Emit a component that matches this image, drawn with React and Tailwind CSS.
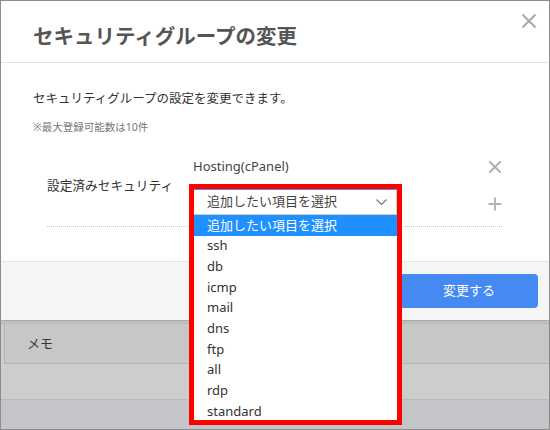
import { useState } from "react";

const options = ["追加したい項目を選択", "ssh", "db", "icmp", "mail", "dns", "ftp", "all", "rdp", "standard"];

function CrossIcon({ size = 14 }) {
  return (
    <svg width={size} height={size} viewBox="0 0 16 16" fill="none" stroke="#a8a8a8" strokeWidth="2">
      <path d="M1.5 1.5 L14.5 14.5 M14.5 1.5 L1.5 14.5" />
    </svg>
  );
}

function PlusIcon() {
  return (
    <svg width="14" height="14" viewBox="0 0 14 14" fill="none" stroke="#b4b4b4" strokeWidth="2">
      <path d="M7 0.5 V13.5 M0.5 7 H13.5" />
    </svg>
  );
}

export default function App() {
  const [selected] = useState(0);

  return (
    <div
      className="w-[550px] h-[430px] overflow-hidden border border-[#8c8c8c] bg-[#cdcdcd] flex flex-col"
      style={{ fontFamily: '"Noto Sans", "Noto Sans CJK JP", sans-serif' }}
    >
      {/* モーダル */}
      <div className="relative z-10 h-[319px] bg-white flex flex-col shadow-[0_1px_3px_rgba(0,0,0,0.25)]">
        <div className="relative h-[62px] border-b border-[#e2e2e2] px-[32px] pt-[21px]">
          <h1 className="text-[20.5px] leading-[28px] font-bold text-[#555]">セキュリティグループの変更</h1>
          <button className="absolute right-[12px] top-[12px]">
            <CrossIcon size={16} />
          </button>
        </div>

        <div className="h-[198px] px-[32px] pt-[26px]">
          <p className="text-[12.5px] leading-[20px] text-[#333]">セキュリティグループの設定を変更できます。</p>
          <p className="mt-[10px] text-[10.5px] leading-[16px] text-[#777]">※最大登録可能数は10件</p>

          <div className="mt-[21px] ml-[14px] w-[455px] flex border-b border-dotted border-[#c8c8c8] pb-[11px]">
            <div className="w-[146px] pt-[19px] text-[12.7px] leading-[20px] text-[#333]">設定済みセキュリティ</div>

            <div className="w-[204px] flex flex-col">
              <div className="text-[13px] leading-[20px] text-[#444]">Hosting(cPanel)</div>

              <div className="relative mt-[13px]">
                <div className="h-[26px] flex items-center justify-between border border-[#ccc] border-t-[#4a8fe0] pl-[13px] pr-[9px] text-[13px] text-[#444] bg-white">
                  <span>追加したい項目を選択</span>
                  <svg width="11" height="6" viewBox="0 0 11 6" fill="none" stroke="#777" strokeWidth="1.2">
                    <path d="M0.5 0.5 L5.5 5.5 L10.5 0.5" />
                  </svg>
                </div>

                {/* ドロップダウン */}
                <ul className="absolute left-0 top-full w-full bg-white z-20">
                  {options.map((opt, i) => (
                    <li
                      key={opt}
                      className={
                        i === selected
                          ? "h-[20.7px] flex items-center pl-[14px] text-[13px] bg-[#1e90ff] text-white"
                          : "h-[20.7px] flex items-center pl-[14px] text-[13px] text-[#333]"
                      }
                    >
                      {opt}
                    </li>
                  ))}
                </ul>

                {/* 注釈の赤枠 */}
                <div className="absolute left-[-4px] top-[-5px] w-[213px] h-[241px] border-[5px] border-[#ff0000] z-30 pointer-events-none" />
              </div>
            </div>

            <div className="flex-1 flex flex-col items-end pt-[4px]">
              <CrossIcon size={14} />
              <div className="mt-[23px]">
                <PlusIcon />
              </div>
            </div>
          </div>
        </div>

        <div className="flex-1 bg-[#f5f5f5] border-t border-[#e6e6e6] flex items-center justify-end pr-[11px]">
          <button className="w-[138px] h-[34px] rounded-[4px] bg-[#4589f2] text-white text-[13px]">変更する</button>
        </div>
      </div>

      {/* 背景の画面 */}
      <div className="flex-1 flex flex-col">
        <div className="h-[4px] border-b border-dotted border-[#a8a8a8]" />
        <div className="ml-[3px] h-[40px] border-l border-b border-[#b4b4b4] bg-[#c7c7c7] flex items-center pl-[22px] text-[13px] text-[#333]">
          メモ
        </div>
        <div className="h-[35px] bg-[#cdcdcd]" />
        <div className="flex-1 border-t border-[#b9b9b9] bg-[#c4c5c8]" />
      </div>
    </div>
  );
}
